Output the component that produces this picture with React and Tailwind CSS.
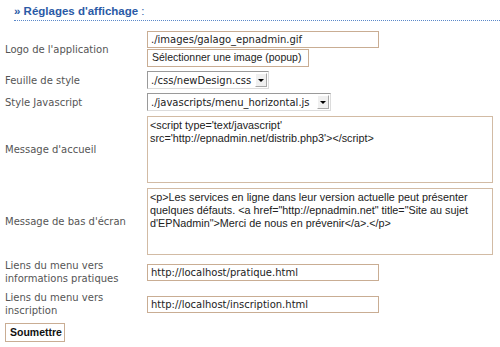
import React from 'react';

const labelCls = 'w-[147px] shrink-0 pl-[5px] text-[#555555] leading-[13px]';
const ctrlFont = { fontFamily: '"Liberation Sans", Arial, sans-serif' };

function Field({ value, width }) {
  return (
    <div className={`h-[17px] border border-[#c9ad93] bg-white flex items-center pl-[3px] text-[#222222] ${width}`}>
      {value}
    </div>
  );
}

function FakeSelect({ value, width }) {
  return (
    <div className={`h-[18px] flex items-center border border-[#9a9a9a] border-r-[#dcdcdc] border-b-[#dcdcdc] bg-white pl-[3px] pr-[1px] ${width}`}>
      <span className="flex-1 text-[#222222] whitespace-nowrap overflow-hidden">{value}</span>
      <span className="w-[12px] h-[14px] flex items-center justify-center bg-[#f0f0f0] border border-[#a8a8a8] border-l-[#ffffff] border-t-[#ffffff]">
        <span className="w-0 h-0 border-l-[3px] border-r-[3px] border-t-[3px] border-l-transparent border-r-transparent border-t-black" />
      </span>
    </div>
  );
}

function Area({ lines }) {
  return (
    <div
      className="w-[346px] h-[67px] border border-[#d2bba4] bg-white px-[2px] pt-[2px] text-[#222222] text-[10.8px] leading-[13px] overflow-hidden"
      style={ctrlFont}
    >
      {lines.map((l, i) => (
        <div key={i} className="whitespace-nowrap">{l}</div>
      ))}
    </div>
  );
}

export default function App() {
  return (
    <div
      className="w-[500px] h-[347px] bg-white overflow-hidden text-[10px]"
      style={{ fontFamily: '"DejaVu Sans", Verdana, sans-serif' }}
    >
      {/* titre */}
      <div className="ml-[14px] pt-[5px] pb-[2px] border-b border-dotted border-[#5b89c9] leading-[13px]">
        <span className="text-[#2a5aa6] text-[11.5px] font-bold" style={ctrlFont}>
          » Réglages d'affichage <span className="font-normal">:</span>
        </span>
      </div>

      <div className="mt-[10px] flex flex-col">
        <div className="flex items-center">
          <div className={labelCls}>Logo de l'application</div>
          <div className="flex flex-col gap-[1px]">
            <Field value="./images/galago_epnadmin.gif" width="w-[232px]" />
            <div
              className="h-[18px] w-[162px] border border-[#c9ad93] bg-white flex items-center pl-[4px] text-[#222222] text-[10.5px] whitespace-nowrap"
              style={ctrlFont}
            >
              Sélectionner une image (popup)
            </div>
          </div>
        </div>

        <div className="flex items-center mt-[4px]">
          <div className={labelCls}>Feuille de style</div>
          <FakeSelect value="./css/newDesign.css" width="w-[122px]" />
        </div>

        <div className="flex items-center mt-[4px]">
          <div className={labelCls}>Style Javascript</div>
          <FakeSelect value="./javascripts/menu_horizontal.js" width="w-[184px]" />
        </div>

        <div className="flex items-center mt-[5px]">
          <div className={labelCls}>Message d'accueil</div>
          <Area
            lines={[
              "<script type='text/javascript'",
              "src='http://epnadmin.net/distrib.php3'></script>",
            ]}
          />
        </div>

        <div className="flex items-center mt-[5px]">
          <div className={labelCls}>Message de bas d'écran</div>
          <Area
            lines={[
              '<p>Les services en ligne dans leur version actuelle peut présenter',
              'quelques défauts. <a href="http://epnadmin.net" title="Site au sujet',
              'd\'EPNadmin">Merci de nous en prévenir</a>.</p>',
            ]}
          />
        </div>

        <div className="flex items-center h-[28px] mt-[3px]">
          <div className={labelCls}>Liens du menu vers<br />informations pratiques</div>
          <Field value="http://localhost/pratique.html" width="w-[232px]" />
        </div>

        <div className="flex items-center h-[28px] mt-[4px]">
          <div className={labelCls}>Liens du menu vers<br />inscription</div>
          <Field value="http://localhost/inscription.html" width="w-[232px]" />
        </div>

        <div className="pl-[5px] mt-[5px]">
          <div
            className="inline-flex items-center h-[19px] w-[60px] pl-[4px] border border-[#c9ad93] bg-white font-bold text-[#111111] text-[10.5px]"
            style={ctrlFont}
          >
            Soumettre
          </div>
        </div>
      </div>
    </div>
  );
}
